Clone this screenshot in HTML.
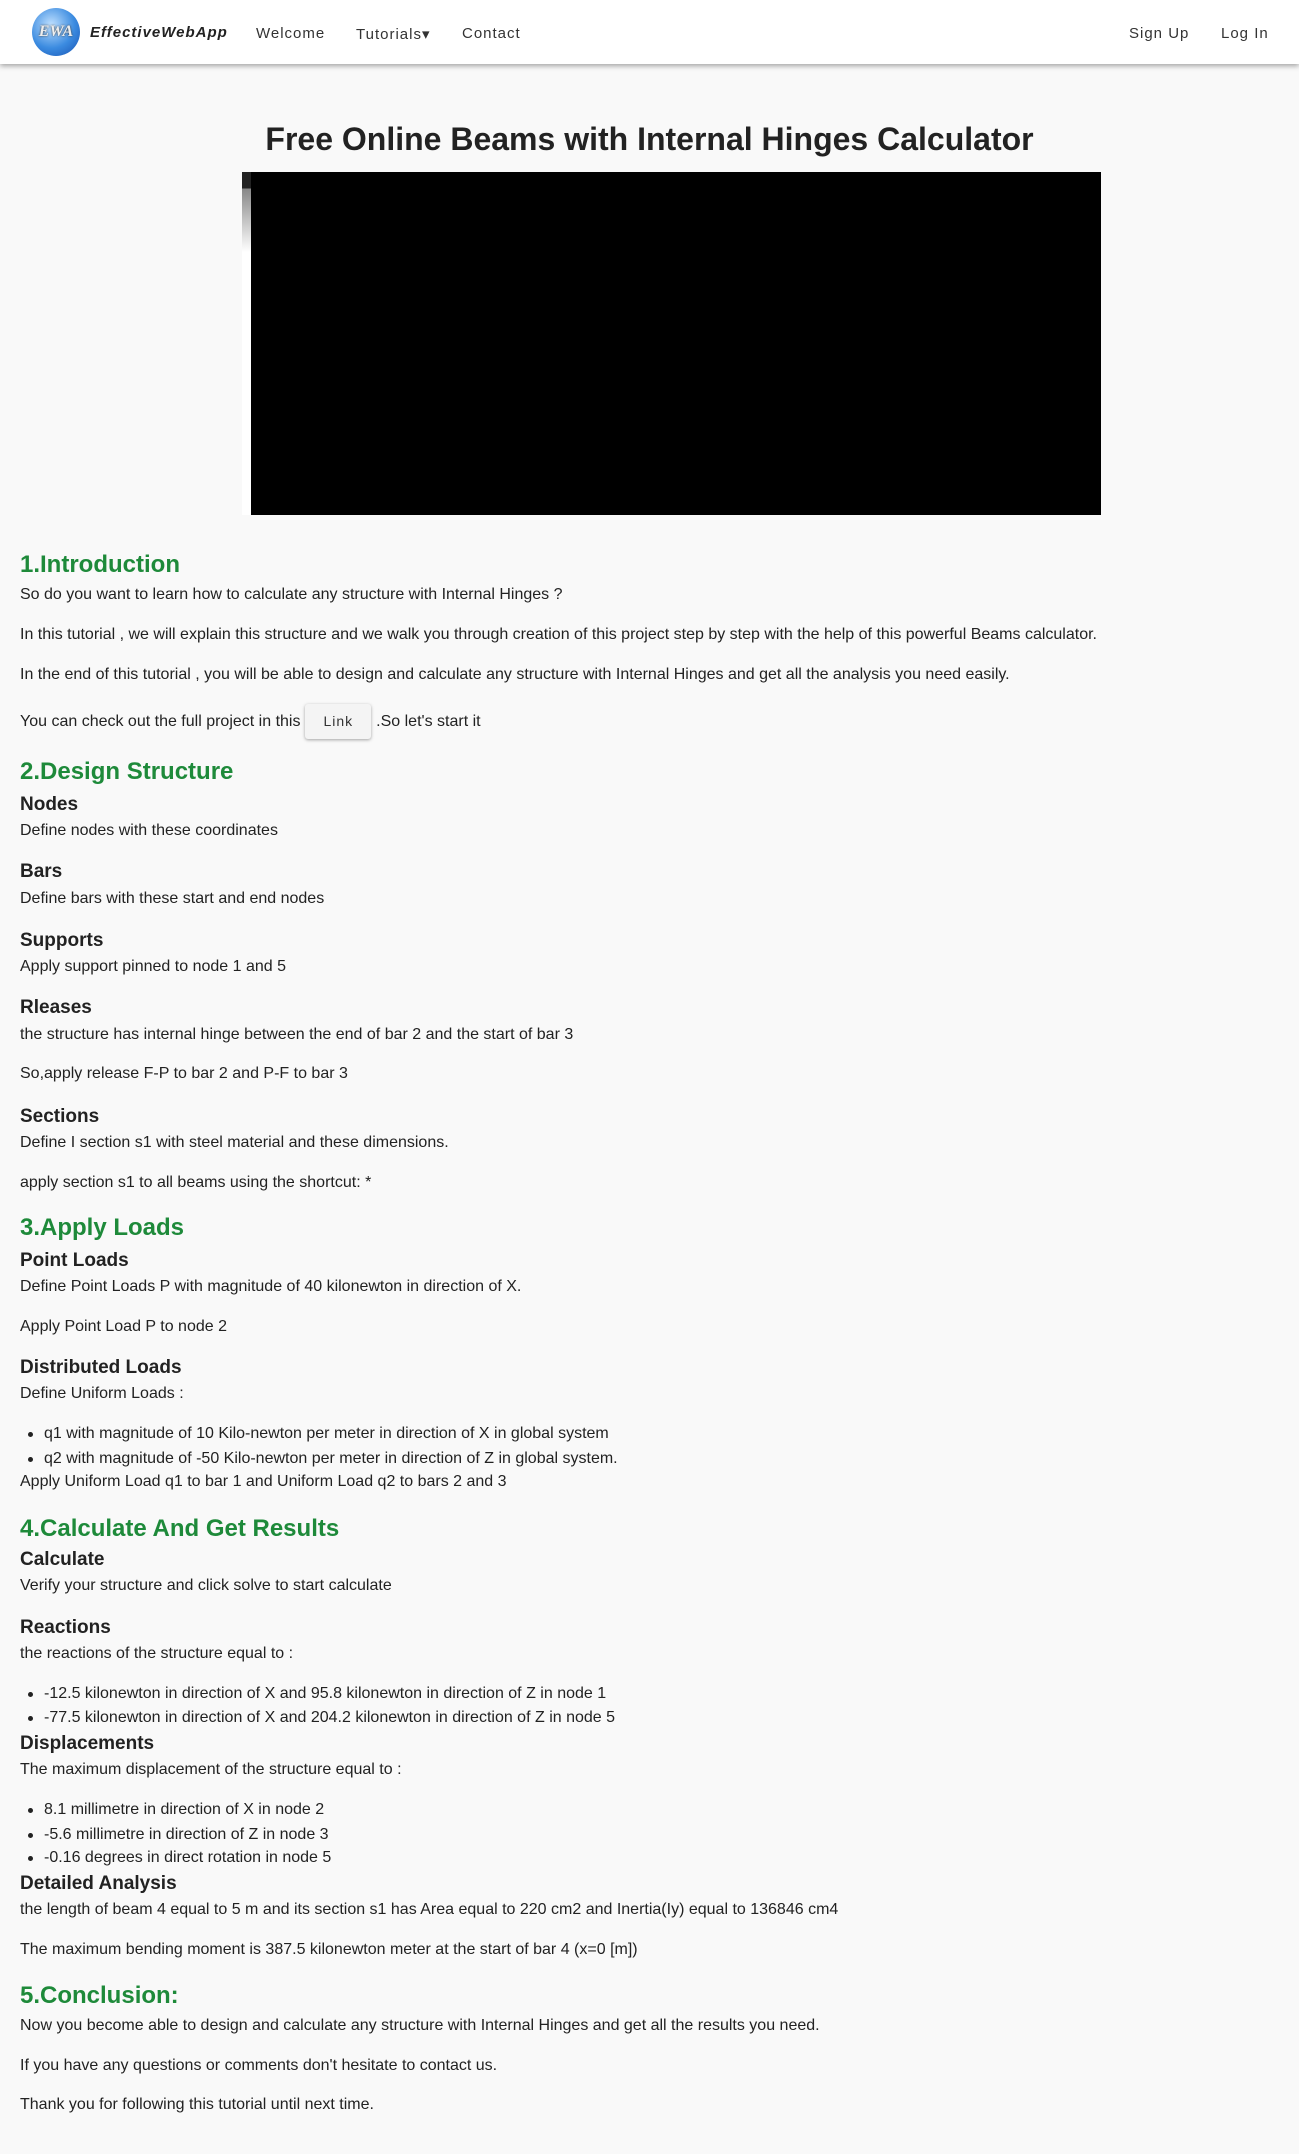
<!DOCTYPE html>
<html><head><meta charset="utf-8"><style>
*{margin:0;padding:0;box-sizing:border-box}
body{width:1299px;height:2154px;background:#f9f9f9;font-family:"Liberation Sans",Arial,sans-serif;color:#222;position:relative;overflow:hidden}
.nav{position:absolute;left:0;top:0;width:1299px;height:64px;background:#fff;box-shadow:0 2px 5px rgba(0,0,0,.35);z-index:2}
.nav a{position:absolute;top:25px;font-size:15px;letter-spacing:1px;color:#333}
.logo{position:absolute;left:32px;top:8px;width:48px;height:48px;border-radius:50%;background:radial-gradient(circle at 40% 35%,#bfe0ff,#3b8be0 55%,#1650b0);color:#eee;font:italic bold 16px "Liberation Serif",serif;text-align:center;line-height:48px;text-shadow:0 0 2px #333}
.brand{position:absolute;left:90px;top:24px;font-size:15px;font-weight:bold;font-style:italic;letter-spacing:1px;color:#222}
h1{position:absolute;left:0;width:1299px;top:121px;text-align:center;font-size:32px;font-weight:bold;color:#222}
.c{position:absolute;left:0;top:2px;width:1299px;height:2150px}
.l{position:absolute;left:20px;font-size:16px;line-height:24px;white-space:nowrap}
.g{position:absolute;left:20px;font-size:24px;line-height:30px;font-weight:bold;color:#1e8a3a;white-space:nowrap}
.h{position:absolute;left:20px;font-size:19px;line-height:24px;font-weight:bold;color:#222;white-space:nowrap}
.b{position:absolute;left:44px;font-size:16px;line-height:24px;white-space:nowrap}
.b:before{content:"";position:absolute;left:-16px;top:10px;width:5px;height:5px;border-radius:50%;background:#222}
.btn{display:inline-block;vertical-align:middle;margin:0 5px;padding:0 18px;height:35px;line-height:35px;background:#f4f4f4;border-radius:3px;box-shadow:0 1px 3px rgba(0,0,0,.35);font-size:14px;letter-spacing:1px;color:#333}
</style></head><body>
<div class="nav">
<div class="logo">EWA</div>
<div class="brand">EffectiveWebApp</div>
<a style="left:256px">Welcome</a>
<a style="left:356px">Tutorials&#9662;</a>
<a style="left:462px">Contact</a>
<a style="left:1129px">Sign Up</a>
<a style="left:1221px">Log In</a>
</div>
<h1>Free Online Beams with Internal Hinges Calculator</h1>
<div style="position:absolute;left:242px;top:172px;width:9px;height:343px;background:linear-gradient(#222 0,#222 16px,#888 17px,#fff 80px,#fff)"></div>
<div style="position:absolute;left:251px;top:172px;width:850px;height:343px;background:#000"></div>
<div class="c">
<div class="g" style="top:548px">1.Introduction</div>
<div class="l" style="top:581px">So do you want to learn how to calculate any structure with Internal Hinges ?</div>
<div class="l" style="top:621px">In this tutorial , we will explain this structure and we walk you through creation of this project step by step with the help of this powerful Beams calculator.</div>
<div class="l" style="top:661px">In the end of this tutorial , you will be able to design and calculate any structure with Internal Hinges and get all the analysis you need easily.</div>
<div class="l" style="top:702px;line-height:35px">You can check out the full project in this<span class="btn">Link</span>.So let's start it</div>
<div class="g" style="top:755px">2.Design Structure</div>
<div class="h" style="top:791px">Nodes</div>
<div class="l" style="top:817px">Define nodes with these coordinates</div>
<div class="h" style="top:858px">Bars</div>
<div class="l" style="top:885px">Define bars with these start and end nodes</div>
<div class="h" style="top:927px">Supports</div>
<div class="l" style="top:953px">Apply support pinned to node 1 and 5</div>
<div class="h" style="top:994px">Rleases</div>
<div class="l" style="top:1021px">the structure has internal hinge between the end of bar 2 and the start of bar 3</div>
<div class="l" style="top:1060px">So,apply release F-P to bar 2 and P-F to bar 3</div>
<div class="h" style="top:1103px">Sections</div>
<div class="l" style="top:1129px">Define I section s1 with steel material and these dimensions.</div>
<div class="l" style="top:1169px">apply section s1 to all beams using the shortcut: *</div>
<div class="g" style="top:1211px">3.Apply Loads</div>
<div class="h" style="top:1247px">Point Loads</div>
<div class="l" style="top:1273px">Define Point Loads P with magnitude of 40 kilonewton in direction of X.</div>
<div class="l" style="top:1313px">Apply Point Load P to node 2</div>
<div class="h" style="top:1354px">Distributed Loads</div>
<div class="l" style="top:1380px">Define Uniform Loads :</div>
<div class="b" style="top:1420px">q1 with magnitude of 10 Kilo-newton per meter in direction of X in global system</div>
<div class="b" style="top:1445px">q2 with magnitude of -50 Kilo-newton per meter in direction of Z in global system.</div>
<div class="l" style="top:1468px">Apply Uniform Load q1 to bar 1 and Uniform Load q2 to bars 2 and 3</div>
<div class="g" style="top:1512px">4.Calculate And Get Results</div>
<div class="h" style="top:1546px">Calculate</div>
<div class="l" style="top:1572px">Verify your structure and click solve to start calculate</div>
<div class="h" style="top:1614px">Reactions</div>
<div class="l" style="top:1640px">the reactions of the structure equal to :</div>
<div class="b" style="top:1680px">-12.5 kilonewton in direction of X and 95.8 kilonewton in direction of Z in node 1</div>
<div class="b" style="top:1704px">-77.5 kilonewton in direction of X and 204.2 kilonewton in direction of Z in node 5</div>
<div class="h" style="top:1730px">Displacements</div>
<div class="l" style="top:1756px">The maximum displacement of the structure equal to :</div>
<div class="b" style="top:1796px">8.1 millimetre in direction of X in node 2</div>
<div class="b" style="top:1821px">-5.6 millimetre in direction of Z in node 3</div>
<div class="b" style="top:1844px">-0.16 degrees in direct rotation in node 5</div>
<div class="h" style="top:1870px">Detailed Analysis</div>
<div class="l" style="top:1896px">the length of beam 4 equal to 5 m and its section s1 has Area equal to 220 cm2 and Inertia(Iy) equal to 136846 cm4</div>
<div class="l" style="top:1936px">The maximum bending moment is 387.5 kilonewton meter at the start of bar 4 (x=0 [m])</div>
<div class="g" style="top:1979px">5.Conclusion:</div>
<div class="l" style="top:2012px">Now you become able to design and calculate any structure with Internal Hinges and get all the results you need.</div>
<div class="l" style="top:2052px">If you have any questions or comments don't hesitate to contact us.</div>
<div class="l" style="top:2091px">Thank you for following this tutorial until next time.</div>
</div>
</body></html>
